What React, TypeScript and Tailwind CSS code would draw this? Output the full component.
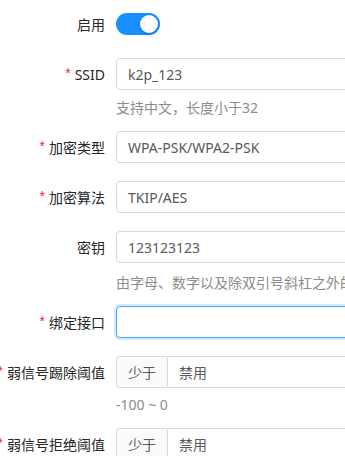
import React from 'react';

const font = { fontFamily: '"Noto Sans", "Noto Sans CJK SC", sans-serif' };

function Label({ text, required }: { text: string; required?: boolean }) {
  return (
    <div className="w-[116px] shrink-0 h-[32px] pr-[11px] flex items-center justify-end whitespace-nowrap text-[14px] text-[#262626]">
      {required && <span className="text-[#f5222d] mr-[4px] text-[14px] leading-none -mt-[2px]" style={{ fontFamily: '"Liberation Sans", sans-serif' }}>*</span>}
      <span>{text}</span>
    </div>
  );
}

function Input({ value, focused }: { value?: string; focused?: boolean }) {
  return (
    <div
      className={`w-[300px] shrink-0 h-[32px] rounded-[4px] border px-[11px] flex items-center text-[14px] text-[#595959] whitespace-nowrap bg-white ${
        focused ? 'border-[#40a9ff] shadow-[0_0_0_2px_rgba(24,144,255,0.2)]' : 'border-[#d9d9d9]'
      }`}
    >
      {value}
    </div>
  );
}

function Help({ text, pt }: { text: string; pt: string }) {
  return (
    <div className={`pl-[116px] ${pt} pb-[12px] leading-[22px] text-[14px] text-[#8c8c8c] whitespace-nowrap`}>{text}</div>
  );
}

function AddonInput({ value }: { value: string }) {
  return (
    <div className="flex shrink-0 h-[32px] text-[14px]">
      <div className="w-[51px] h-[32px] border border-[#d9d9d9] border-r-0 rounded-l-[4px] bg-[#fafafa] flex items-center justify-center text-[#595959]">少于</div>
      <div className="w-[260px] h-[32px] border border-[#d9d9d9] rounded-r-[4px] px-[11px] flex items-center text-[#595959]">{value}</div>
    </div>
  );
}

export default function App() {
  return (
    <div className="w-[345px] h-[456px] overflow-hidden bg-white pt-[8px]" style={font}>
      <div className="flex items-center mb-[18px]">
        <Label text="启用" />
        <div className="w-[44px] h-[22px] rounded-full bg-[#1890ff] relative">
          <div className="absolute right-[2px] top-[2px] w-[18px] h-[18px] rounded-full bg-white shadow-[0_2px_4px_rgba(0,35,11,0.2)]" />
        </div>
      </div>

      <div className="flex items-center">
        <Label text="SSID" required />
        <Input value="k2p_123" />
      </div>
      <Help text="支持中文，长度小于32" pt="pt-[7px]" />

      <div className="flex items-center mb-[18px]">
        <Label text="加密类型" required />
        <Input value="WPA-PSK/WPA2-PSK" />
      </div>

      <div className="flex items-center mb-[18px]">
        <Label text="加密算法" required />
        <Input value="TKIP/AES" />
      </div>

      <div className="flex items-center">
        <Label text="密钥" />
        <Input value="123123123" />
      </div>
      <Help text="由字母、数字以及除双引号斜杠之外的字符组成，长度8~63" pt="pt-[9px]" />

      <div className="flex items-center mb-[18px]">
        <Label text="绑定接口" required />
        <Input focused />
      </div>

      <div className="flex items-center">
        <Label text="弱信号踢除阈值" required />
        <AddonInput value="禁用" />
      </div>
      <Help text="-100 ~ 0" pt="pt-[6px]" />

      <div className="flex items-center">
        <Label text="弱信号拒绝阈值" required />
        <AddonInput value="禁用" />
      </div>
    </div>
  );
}
